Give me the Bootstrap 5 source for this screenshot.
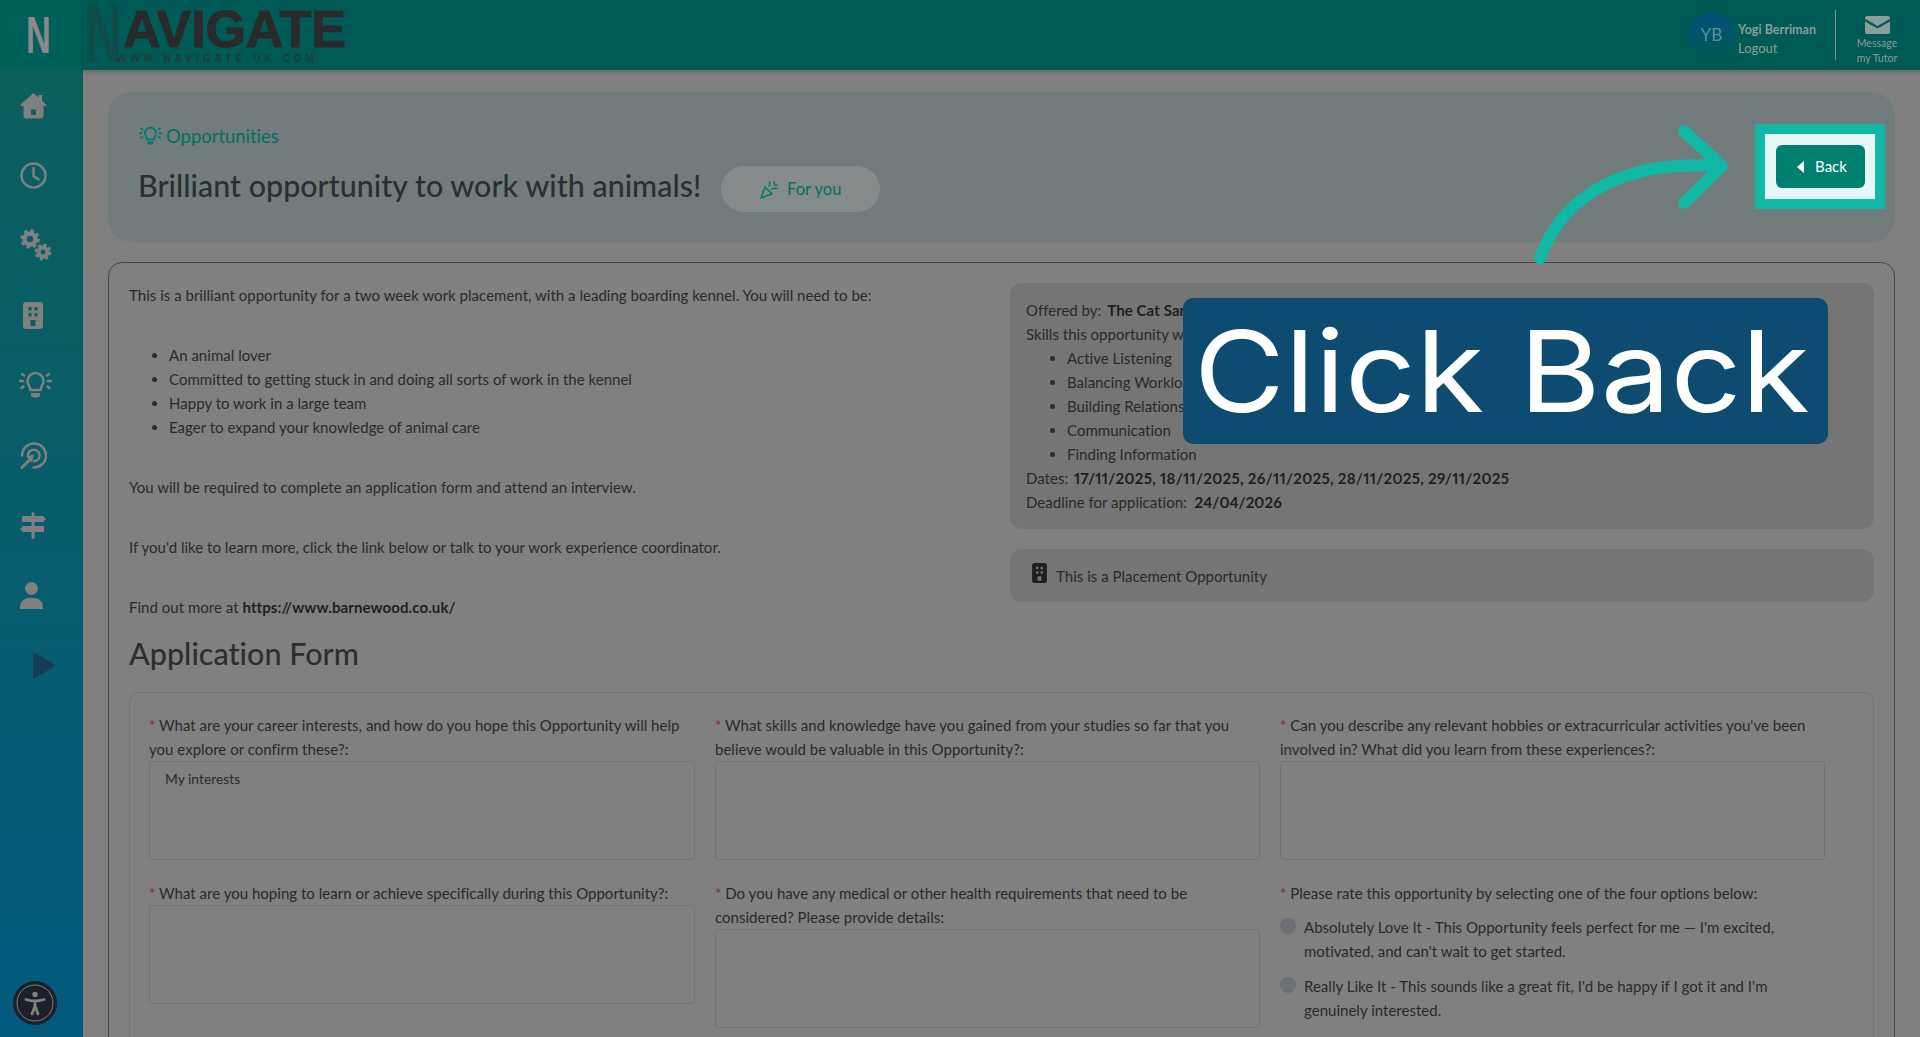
<!DOCTYPE html>
<html lang="en">
<head>
<meta charset="UTF-8">
<meta name="viewport" content="width=device-width, initial-scale=1.0">
<title>Opportunities</title>
<link rel="stylesheet" href="https://cdn.jsdelivr.net/npm/bootstrap@5.3.0/dist/css/bootstrap.min.css">
<style>
html, body { height: 100%; overflow: hidden; }
body { font-family: Lato, "Liberation Sans", sans-serif; font-size: 15px; line-height: 24px; letter-spacing: .02px; background: #808080; color: #282a2c; }
.side-rail { width: 83px; height: 1037px; flex: none; background: linear-gradient(180deg, #0b5f5c 70px, #045a7e 100%); position: relative; }
.rail-logo { height: 70px; background: #00615b; padding: 2px 0 0 26px; }
.rail-n { display: block; width: 32px; font-family: "Liberation Sans", sans-serif; font-size: 52px; line-height: 66px; font-weight: 700; color: #8a8a8a; transform: scaleX(.66); transform-origin: left center; }
.rail-item { height: 70px; display: flex; align-items: center; justify-content: center; color: #808080; padding-right: 17px; }
.nudge-right svg { margin-left: 5px; }
.nudge-left svg { margin-right: 4px; }
.rail-play { color: #153e52; padding: 0 0 0 4px; }
.access-btn { position: absolute; left: 13px; bottom: 12px; width: 44px; height: 44px; border-radius: 50%; background: #1a2129; display: flex; align-items: center; justify-content: center; }
.top-strip { height: 70px; background: #005a55; box-shadow: 0 1px 4px rgba(0,0,0,.3); position: relative; z-index: 1; }
.brand-box { position: relative; width: 270px; padding-left: 40px; font-family: "Liberation Sans", sans-serif; }
.brand-n { position: absolute; left: 2px; top: 0; font-size: 85px; line-height: 66px; font-weight: 700; color: #0e4d4a; transform: scaleX(.6); transform-origin: left center; }
.brand-word { position: relative; font-size: 52px; line-height: 46px; padding-top: 6px; font-weight: 700; letter-spacing: -.1px; color: #2a2a2a; -webkit-text-stroke: 1px #2a2a2a; box-sizing: content-box; }
.brand-url { position: relative; font-size: 10px; line-height: 12px; letter-spacing: 4.05px; color: #243a38; font-weight: 700; white-space: nowrap; margin: 1px 0 0 -6px; }
.avatar-dot { width: 45px; height: 45px; border-radius: 50%; background: linear-gradient(180deg, #06507c, #005a55); color: #5e8f9c; font-size: 17px; margin-right: 4px; }
.user-text { padding-top: 7px; }
.user-name { font-size: 12.5px; line-height: 19px; font-weight: 700; color: #8d9d9b; }
.user-link { font-size: 13px; line-height: 19px; color: #8d9d9b; }
.strip-divider { width: 1px; height: 50px; background: #7f9794; margin: 0 15px 0 19px; }
.msg-box { width: 52px; margin-right: 17px; font-size: 10.5px; line-height: 15px; text-align: center; color: #8d9d9b; padding-top: 12px; }
.msg-box svg { margin-bottom: 2px; }
.page-body { padding: 22px 25px 0; }
.hero-band { height: 150px; border-radius: 24px; background: #727c7c; padding: 31px 30px 30px; }
.crumb-line { color: #006f62; font-size: 18.4px; line-height: 26px; margin-bottom: 9px; }
.crumb-line svg { margin-left: 1px; }
.hero-title { font-size: 30.4px; line-height: 40px; font-weight: 500; margin: 0; color: #2c2e30; }
.foryou-pill { width: 159px; height: 46px; border-radius: 23px; background: #848b8a; color: #006f62; font-size: 16.5px; margin-left: 20px; margin-top: 8px; }
.main-box { margin-top: 20px; border: 1px solid #474747; border-radius: 14px; padding: 20px; height: 900px; }
.left-text p, .left-text ul { margin-bottom: 36px; }
.left-text ul { padding-left: 40px; }
.left-text a { color: #1d1f21; font-weight: 700; letter-spacing: .1px; text-decoration: none; }
.right-side { width: 864px; flex: none; }
.grey-panel { background: #757575; border-radius: 12px; padding: 15px 16px; margin-bottom: 20px; }
.grey-panel ul { margin: 0; padding-left: 41px; }
.grey-panel b { color: #1d1f21; font-variant-numeric: proportional-nums; letter-spacing: .1px; }
.grey-panel .date-list { letter-spacing: .32px; margin-left: 2px; }
.offer-name { margin-left: 2px; }
.place-panel { height: 53px; padding: 14px 22px; gap: 9px; }
.place-panel svg { margin: -6px 0 0 0; }
.form-heading { font-size: 30.5px; line-height: 40px; font-weight: 500; margin: -22px 0 19px; color: #2c2e30; }
.form-box { border: 1px solid #747474; border-radius: 10px; padding: 20px 48px 40px 19px; display: grid; grid-template-columns: 546px 545px 545px; column-gap: 20px; row-gap: 21px; align-items: start; }
.req { color: #8a2a2a; }
.ans-box { display: block; width: 100%; height: 99px; border: 1px solid #747474; border-radius: 3px; background: transparent; padding: 5px 15px; font-size: 13.8px; color: #282a2c; }
.rate-title { margin-bottom: 10px; }
.radio-row { display: flex; gap: 8px; margin-bottom: 11px; }
.radio-dot { flex: none; width: 16px; height: 16px; margin-top: 3px; border-radius: 50%; background: #6c7075; }
.dim-stage { position: absolute; inset: 0; pointer-events: none; z-index: 5; }
.back-ring { position: absolute; left: 1755px; top: 124px; width: 130px; height: 85px; border: 10px solid #12b8a6; background: #e6f7f7; display: flex; align-items: center; justify-content: center; }
.back-btn { width: 89px; height: 43px; background: #00806f; color: #fff; border: 0; border-radius: 6px; font-size: 15px; padding: 0 0 0 4px; gap: 10px; }
.click-tag { position: absolute; left: 1183px; top: 298px; width: 645px; height: 146px; padding-right: 8px; border-radius: 10px; background: #0d4c70; color: #fff; font-family: Inter, sans-serif; font-size: 113px; line-height: 146px; text-align: center; white-space: nowrap; }
.click-tag span { display: inline-block; transform: scaleX(1.1); }
.arrow-layer { position: absolute; left: 0; top: 0; }
</style>
</head>
<body class="d-flex">
<aside class="side-rail">
  <div class="rail-logo"><span class="rail-n">N</span></div>
  <div class="rail-item"><svg width="27" height="27" viewBox="0 0 27 27" fill="currentColor"><path d="M13.500 1 1 12.200c-.9 1 .1 2 1.300 1.800H3.500v10c0 1.400 1 2.400 2.400 2.400h15.200c1.400 0 2.400-1 2.400-2.400V14h1.200c1.200.2 2.200-.8 1.300-1.800L22 8.700V3h-3.500v2.500zM11 17.500h5V23h-5z" fill-rule="evenodd"/></svg></div>
  <div class="rail-item"><svg width="27" height="27" viewBox="0 0 27 27" fill="none" stroke="currentColor" stroke-width="2.500" stroke-linecap="round"><circle cx="13.500" cy="13.500" r="12"/><path d="M13.500 6v8l5 3.500"/></svg></div>
  <div class="rail-item nudge-right"><svg width="32" height="32" viewBox="0 0 32 32" fill="none" stroke="currentColor"><circle cx="10" cy="10" r="5.500" stroke-width="4.500"/><circle cx="10" cy="10" r="8.500" stroke-width="2.500" stroke-dasharray="3.400 3.300"/><circle cx="23" cy="23" r="4.500" stroke-width="4"/><circle cx="23" cy="23" r="7.200" stroke-width="2.500" stroke-dasharray="3 2.700"/></svg></div>
  <div class="rail-item"><svg width="20" height="27" viewBox="0 0 20 27" fill="currentColor"><path fill-rule="evenodd" d="M3 0h14c1.700 0 3 1.300 3 3v21c0 1.700-1.300 3-3 3H3c-1.700 0-3-1.300-3-3V3c0-1.700 1.300-3 3-3zm2.500 5v3.500h3V5zm6 0v3.500h3V5zm-6 6v3.500h3V11zm6 0v3.500h3V11zM7.500 18v6h5v-6z"/></svg></div>
  <div class="rail-item nudge-right"><svg width="33" height="28" viewBox="0 0 33 28" fill="none" stroke="currentColor" stroke-width="2.500" stroke-linecap="round"><path d="M11.500 19c0-3-3-5-3-9a8 8 0 0 1 16 0c0 4-3 6-3 9z"/><path d="M12 22h9v1.500a3 3 0 0 1-3 3h-3a3 3 0 0 1-3-3z" fill="currentColor" stroke="none"/><path d="M3 3l2 1.500M1 10h3M2.500 17l2-1.500M30 3l-2 1.500M32 10h-3M30.500 17l-2-1.500"/></svg></div>
  <div class="rail-item"><svg width="27" height="27" viewBox="0 0 27 27" fill="none" stroke="currentColor" stroke-width="2.500" stroke-linecap="round"><path d="M2 13.500A12 12 0 1 1 13.500 25.500"/><path d="M8 13.500A5.800 5.800 0 1 1 14 19.300"/><path d="M2 25.500l8-8" stroke-width="3"/><path d="M14 12.500 6 14.500 12 20.500z" fill="currentColor" stroke="none"/></svg></div>
  <div class="rail-item"><svg width="26" height="27" viewBox="0 0 26 27" fill="currentColor"><path d="M11.500 1.500a1.500 1.500 0 0 1 3 0V4H23l3 3-3 3h-8.500v4H24v6h-9.500v5.500a1.500 1.500 0 0 1-3 0V20H3l-3-3 3-3h8.500v-4H2V4h9.500z"/></svg></div>
  <div class="rail-item nudge-left"><svg width="23" height="27" viewBox="0 0 23 27" fill="currentColor"><circle cx="11.500" cy="6.500" r="6.500"/><path d="M0 27v-2c0-5 4-9 9-9h5c5 0 9 4 9 9v2z"/></svg></div>
  <div class="rail-item rail-play"><svg width="22" height="25" viewBox="0 0 22 25" fill="currentColor"><path d="M0 2c0-1.600 1.300-2.400 2.600-1.600L20.800 11c1.600.8 1.600 2.200 0 3L2.600 24.600C1.300 25.400 0 24.600 0 23z"/></svg></div>
  <div class="access-btn"><svg width="38" height="38" viewBox="0 0 38 38" fill="none"><circle cx="19" cy="19" r="18" stroke="#808080"/><circle cx="19" cy="10.500" r="2.700" fill="#808080"/><path d="M10 15.500c3 1 6 1.500 9 1.500s6-.5 9-1.500M19 17v5M19 22l-3 8M19 22l3 8" stroke="#808080" stroke-width="2.800" stroke-linecap="round"/></svg></div>
</aside>

<main class="flex-grow-1">
  <header class="top-strip d-flex align-items-start">
    <div class="brand-box">
      <div class="brand-n">N</div>
      <div class="brand-word">AVIGATE</div>
      <div class="brand-url">WWW.NAVIGATE.UK.COM</div>
    </div>
    <div class="d-flex align-items-center ms-auto h-100">
      <div class="avatar-dot d-flex align-items-center justify-content-center">YB</div>
      <div class="user-text">
        <div class="user-name">Yogi Berriman</div>
        <div class="user-link">Logout</div>
      </div>
      <div class="strip-divider"></div>
      <div class="msg-box">
        <svg width="25" height="18" viewBox="0 0 25 18" fill="#8d9d9b" class="d-block mx-auto"><path d="M2 0h21c1 0 2 1 2 2v.8L12.500 10 0 2.800V2c0-1 1-2 2-2zM0 5.500l12.500 7 12.500-7V16c0 1-1 2-2 2H2c-1 0-2-1-2-2z"/></svg>
        Message<br>my Tutor
      </div>
    </div>
  </header>

  <div class="page-body">
    <section class="hero-band">
      <div class="crumb-line d-flex align-items-center gap-1">
        <svg width="23" height="20" viewBox="0 0 33 28" fill="none" stroke="#007a6c" stroke-width="2.500" stroke-linecap="round"><path d="M11.500 19c0-3-3-5-3-9a8 8 0 0 1 16 0c0 4-3 6-3 9z"/><path d="M12 22h9v1.500a3 3 0 0 1-3 3h-3a3 3 0 0 1-3-3z" fill="#007a6c" stroke="none"/><path d="M3 3l2 1.500M1 10h3M2.500 17l2-1.500M30 3l-2 1.500M32 10h-3M30.500 17l-2-1.500"/></svg>
        Opportunities
      </div>
      <div class="d-flex align-items-center">
        <h1 class="hero-title">Brilliant opportunity to work with animals!</h1>
        <div class="foryou-pill d-flex align-items-center justify-content-center gap-2">
          <svg width="19" height="19" viewBox="0 0 19 19" fill="none" stroke="#007a6c" stroke-width="1.500" stroke-linecap="round"><path d="M1 18l4-11 7 7z"/><path d="M9 6c1-1 1-2 .5-4M12 9c1.500-1 3-1 5-.5M14 2l.5 2M17 5l-2 .5"/></svg>
          For you
        </div>
      </div>
    </section>

    <section class="main-box">
      <div class="d-flex">
        <div class="left-text flex-grow-1">
          <p>This is a brilliant opportunity for a two week work placement, with a leading boarding kennel. You will need to be:</p>
          <ul>
            <li>An animal lover</li>
            <li>Committed to getting stuck in and doing all sorts of work in the kennel</li>
            <li>Happy to work in a large team</li>
            <li>Eager to expand your knowledge of animal care</li>
          </ul>
          <p>You will be required to complete an application form and attend an interview.</p>
          <p>If you'd like to learn more, click the link below or talk to your work experience coordinator.</p>
          <p>Find out more at <a href="#">https://www.barnewood.co.uk/</a></p>
        </div>
        <div class="right-side">
          <div class="grey-panel">
            <div>Offered by: <b class="offer-name">The Cat Sanctuary</b></div>
            <div>Skills this opportunity will develop:</div>
            <ul>
              <li>Active Listening</li>
              <li>Balancing Workload</li>
              <li>Building Relationships</li>
              <li>Communication</li>
              <li>Finding Information</li>
            </ul>
            <div>Dates: <b class="date-list">17/11/2025, 18/11/2025, 26/11/2025, 28/11/2025, 29/11/2025</b></div>
            <div>Deadline for application:&nbsp; <b>24/04/2026</b></div>
          </div>
          <div class="grey-panel place-panel d-flex align-items-center">
            <svg width="15" height="20" viewBox="0 0 20 27" fill="#1d1f21"><path fill-rule="evenodd" d="M3 0h14c1.700 0 3 1.300 3 3v21c0 1.700-1.300 3-3 3H3c-1.700 0-3-1.300-3-3V3c0-1.700 1.300-3 3-3zm2.500 5v3.500h3V5zm6 0v3.500h3V5zm-6 6v3.500h3V11zm6 0v3.500h3V11zM7.500 18v6h5v-6z"/></svg>
            <span>This is a Placement Opportunity</span>
          </div>
        </div>
      </div>
      <h2 class="form-heading">Application Form</h2>
      <div class="form-box">
        <div><span class="req">*</span> What are your career interests, and how do you hope this Opportunity will help you explore or confirm these?:<div class="ans-box">My interests</div></div>
        <div><span class="req">*</span> What skills and knowledge have you gained from your studies so far that you believe would be valuable in this Opportunity?:<div class="ans-box"></div></div>
        <div><span class="req">*</span> Can you describe any relevant hobbies or extracurricular activities you've been involved in? What did you learn from these experiences?:<div class="ans-box"></div></div>
        <div><span class="req">*</span> What are you hoping to learn or achieve specifically during this Opportunity?:<div class="ans-box"></div></div>
        <div><span class="req">*</span> Do you have any medical or other health requirements that need to be considered? Please provide details:<div class="ans-box"></div></div>
        <div>
          <div class="rate-title"><span class="req">*</span> Please rate this opportunity by selecting one of the four options below:</div>
          <div class="radio-row"><span class="radio-dot"></span><span>Absolutely Love It - This Opportunity feels perfect for me — I'm excited, motivated, and can't wait to get started.</span></div>
          <div class="radio-row"><span class="radio-dot"></span><span>Really Like It - This sounds like a great fit, I'd be happy if I got it and I'm genuinely interested.</span></div>
        </div>
      </div>
    </section>
  </div>
</main>

<div class="dim-stage">
  <svg class="arrow-layer" width="1920" height="300" viewBox="0 0 1920 300" fill="none" stroke="#12b8a6" stroke-width="12" stroke-linecap="round" stroke-linejoin="round"><path d="M1540 258C1565 190 1630 160 1720 166"/><path d="M1684 131l38 35-38 37"/></svg>
  <div class="back-ring"><button class="back-btn btn d-flex align-items-center justify-content-center"><svg width="8" height="12" viewBox="0 0 8 12" fill="#fff"><path d="M7 0v12L0 6z"/></svg>Back</button></div>
  <div class="click-tag"><span>Click Back</span></div>
</div>
</body>
</html>
